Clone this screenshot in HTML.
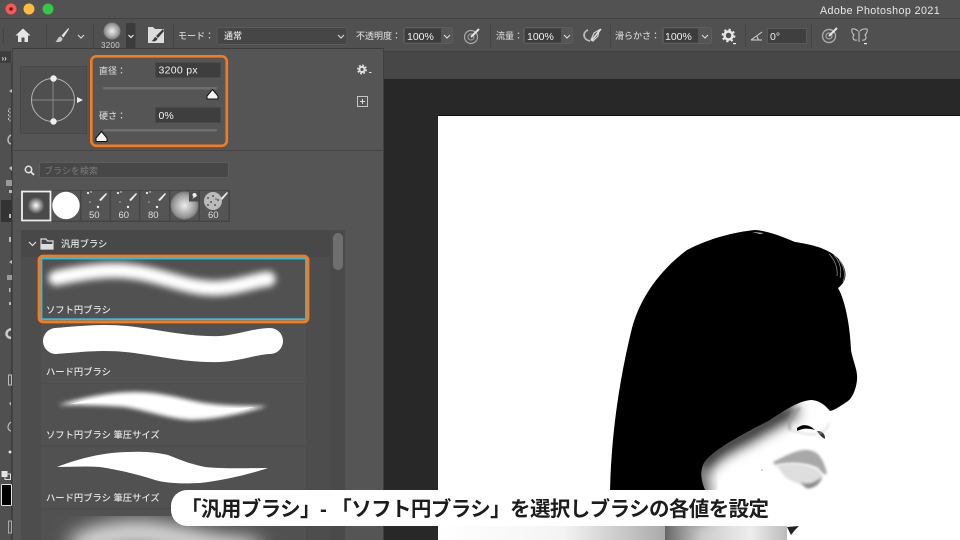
<!DOCTYPE html>
<html lang="ja"><head><meta charset="utf-8"><title>Photoshop</title>
<style>
html,body{margin:0;padding:0;background:#282828;width:960px;height:540px;overflow:hidden}
svg{display:block}
text{font-family:"Liberation Sans","Noto Sans CJK JP",sans-serif;fill:#d6d6d6;font-size:9px}
.l{fill:#d0d0d0;font-weight:500}
.v{fill:#f0f0f0;font-size:10.5px}
.it{fill:#e4e4e4;font-size:9.3px;font-weight:500}
.ic{fill:none;stroke:#d4d4d4;stroke-width:1.2}
</style></head><body>
<svg width="960" height="540" viewBox="0 0 960 540" xmlns="http://www.w3.org/2000/svg">
<defs>
<filter id="b1" x="-20%" y="-80%" width="140%" height="260%"><feGaussianBlur stdDeviation="3.4"/></filter>
<filter id="b2" x="-20%" y="-80%" width="140%" height="260%"><feGaussianBlur stdDeviation="2.2"/></filter>
<filter id="b3" x="-30%" y="-100%" width="160%" height="300%"><feGaussianBlur stdDeviation="10"/></filter>
<filter id="b4" x="-30%" y="-30%" width="160%" height="160%"><feGaussianBlur stdDeviation="7"/></filter>
<filter id="b5" x="-30%" y="-30%" width="160%" height="160%"><feGaussianBlur stdDeviation="1.200"/></filter>
<radialGradient id="sb"><stop offset="0" stop-color="#fff"/><stop offset="1" stop-color="#fff" stop-opacity="0"/></radialGradient>
<radialGradient id="sb2"><stop offset="0" stop-color="#eee"/><stop offset=".8" stop-color="#999"/><stop offset="1" stop-color="#777"/></radialGradient>
<clipPath id="face"><path d="M660 440L760 400 850 395 852 420 848 450 833 480 820 510 806 526 790 540 660 540Z"/></clipPath>
<clipPath id="lst"><rect x="41" y="510" width="265" height="30"/></clipPath>
<linearGradient id="ggr" x1="0" y1="0" x2="1" y2="0"><stop offset="0" stop-color="#fff"/><stop offset=".55" stop-color="#f4f4f4"/><stop offset="1" stop-color="#aaa"/></linearGradient>
<linearGradient id="neck" x1="0" y1="0" x2="1" y2="0"><stop offset="0" stop-color="#666"/><stop offset=".3" stop-color="#ccc"/><stop offset=".7" stop-color="#eee"/><stop offset="1" stop-color="#bbb"/></linearGradient>
</defs>

<!-- chrome -->
<rect width="960" height="18" fill="#525252"/>
<rect y="18" width="960" height="1" fill="#424242"/>
<rect y="19" width="960" height="33" fill="#505050"/>
<rect y="52" width="960" height="27" fill="#474747"/>
<rect y="51" width="960" height="1" fill="#424242"/>
<rect y="79" width="960" height="461" fill="#282828"/>

<circle cx="11" cy="9" r="5.500" fill="#fc5753"/><circle cx="11" cy="9" r="1.700" fill="#6e1512"/>
<circle cx="29" cy="9" r="5.500" fill="#fdbc40"/>
<circle cx="48" cy="9" r="5.500" fill="#33c748"/>
<text x="820" y="14" style="font-size:10.700px;fill:#e8e8e8;letter-spacing:.42px">Adobe Photoshop 2021</text>

<!-- toolbar separators -->
<g fill="#444"><rect x="3" y="27" width="1" height="17"/><rect x="46" y="24" width="1" height="23"/><rect x="93" y="24" width="1" height="23"/><rect x="173" y="24" width="1" height="23"/><rect x="490" y="24" width="1" height="23"/><rect x="610" y="24" width="1" height="23"/><rect x="745" y="24" width="1" height="23"/><rect x="811" y="24" width="1" height="23"/></g>

<!-- home -->
<path d="M23 28.500L15.500 35.500H18V42H21.500V37.500H24.500V42H28V35.500H30.500Z" fill="#e6e6e6"/>
<!-- brush -->
<path d="M68.500 28L61.500 35.500 63.500 37.500 69 29Z" fill="#e4e4e4"/>
<path d="M60.500 36.500C57.500 37 58 40 55.500 41.500 59 43 62.500 41.500 62.500 38.500Z" fill="#c8c8c8"/>
<path d="M78 35l3 3 3-3" class="ic"/>
<circle cx="112" cy="31" r="8.500" fill="url(#sb2)"/>
<text x="101" y="48" style="font-size:8px;fill:#ccc;letter-spacing:.3px">3200</text>
<rect x="126" y="23" width="9.500" height="25" rx="1" fill="#3b3b3b"/>
<path d="M128.500 35l2.500 2.500 2.500-2.500" class="ic" style="stroke:#eee"/>
<path d="M148 27H153L155 29H164V43H148Z" fill="#ddd"/>
<path d="M163 29L156 36 158 38 164 31Z M155.500 37C153.500 37.500 154 40 151.500 41 154 42 157 41 157.500 38.500Z" fill="#3a3a3a"/>

<text x="178" y="39" class="l">モード：</text>
<rect x="217" y="27.500" width="130" height="17" rx="2" fill="#464646" stroke="#5a5a5a"/>
<text x="224" y="39" style="font-size:9px;fill:#e2e2e2;font-weight:500">通常</text>
<path d="M338 35l3 3 3-3" class="ic"/>

<text x="356" y="39" class="l">不透明度：</text>
<rect x="403.500" y="27.500" width="49" height="16" rx="2.500" fill="#555" stroke="#5e5e5e"/>
<rect x="405" y="28.500" width="36" height="14" fill="#3c3c3c"/>
<text x="407" y="40" class="v">100%</text>
<path d="M444 35l3 3 3-3" class="ic"/>
<circle cx="471" cy="37" r="6.500" class="ic" style="stroke:#aaa"/><circle cx="471" cy="37" r="3" class="ic" style="stroke:#999"/>
<path d="M471 37L479 29" stroke="#e4e4e4" stroke-width="2"/>

<text x="496" y="39" class="l">流量：</text>
<rect x="523.500" y="27.500" width="49" height="16" rx="2.500" fill="#555" stroke="#5e5e5e"/>
<rect x="525" y="28.500" width="36" height="14" fill="#3c3c3c"/>
<text x="527" y="40" class="v">100%</text>
<path d="M564 35l3 3 3-3" class="ic"/>
<path d="M588 30C582 32 583 40 590 41" class="ic" style="stroke:#bbb;stroke-width:1.800"/>
<path d="M591 40L594 33 599 30 598 36 593 41Z" class="ic"/>
<path d="M592 40L601 29" stroke="#e4e4e4" stroke-width="1.500"/>

<text x="615" y="39" class="l">滑らかさ：</text>
<rect x="662.500" y="27.500" width="49" height="16" rx="2.500" fill="#555" stroke="#5e5e5e"/>
<rect x="664" y="28.500" width="34" height="14" fill="#3c3c3c"/>
<text x="665" y="40" class="v">100%</text>
<path d="M702 35l3 3 3-3" class="ic"/>
<circle cx="728.500" cy="35.500" r="4" fill="none" stroke="#e8e8e8" stroke-width="2.500"/>
<circle cx="728.500" cy="35.500" r="6" fill="none" stroke="#e8e8e8" stroke-width="1.800" stroke-dasharray="2.200 2.500"/>
<rect x="733" y="43" width="3" height="1.200" fill="#eee"/>
<path d="M751 40L762 32M751 40H762M757 36.500L758.500 40" class="ic" style="stroke-width:1"/>
<rect x="767.500" y="28.500" width="39" height="15" fill="#3f3f3f" stroke="#5a5a5a"/>
<text x="770" y="40" class="v">0°</text>
<circle cx="829" cy="36" r="6.500" class="ic" style="stroke:#aaa;stroke-width:1.400"/><circle cx="829" cy="36" r="3" class="ic" style="stroke:#aaa"/>
<path d="M829 36L837 28" stroke="#e4e4e4" stroke-width="2"/>
<path d="M858 31C855 28 852 29 852 29 851 32 853 34 854 35 852 37 853 41 857 40M860 31C863 28 866 29 867 29 868 32 866 34 865 35 867 37 866 41 862 40M859 31V42" class="ic" style="stroke:#ccc;stroke-width:1"/>
<rect x="864" y="43" width="3" height="1.200" fill="#eee"/>

<!-- document -->
<rect x="438" y="115" width="522" height="1" fill="#111"/>
<rect x="438" y="116" width="522" height="424" fill="#fff"/>
<rect x="438" y="526" width="227" height="14" fill="url(#ggr)"/>
<rect x="665" y="526" width="122" height="14" fill="url(#neck)"/>

<!-- face shading -->
<g clip-path="url(#face)">
<path d="M700 472C704 458 720 448 745 436 765 424 780 416 795 408" fill="none" stroke="#000" stroke-width="14" filter="url(#b4)"/>
<ellipse cx="698" cy="495" rx="12" ry="28" fill="#555" filter="url(#b4)"/>
</g>
<path d="M787 527L799 526 795 530 791 535Z" fill="#222"/>
<path d="M610 492C611 440 618 385 632 328C640 298 660 270 687 250C710 238 735 232 755 230C768 231 780 236 795 242C815 245 835 250 843 265C848 275 845 283 838 288C845 300 850 325 851 350C853 362 858 370 857 380C856 390 852 398 848 401C842 405 835 410 830 411C825 405 820 401 812 400C800 400 785 410 770 420C745 433 720 446 708 458C700 465 699 478 706 492Z" fill="#000"/>
<path d="M839 260C844 266 846 274 843 282M834 255C840 262 842 270 840 278M829 254C835 260 838 268 837 276" stroke="#999" stroke-width=".7" fill="none"/>
<path d="M752 232L764 233 760 234Z" fill="#ccc"/>
<!-- nose -->
<path d="M800 408C792 414 787 422 790 430" fill="none" stroke="#999" stroke-width="2" filter="url(#b5)"/>
<path d="M797 428C803 423 810 425 815 430 808 428 803 428 797 431Z" fill="#000"/>
<path d="M817 431C822 431 825 433 825 439 821 437 819 434 817 431Z" fill="#333"/>
<path d="M790 430C800 433 824 441 829 423" fill="none" stroke="#ccc" stroke-width="1.200" filter="url(#b5)"/>
<!-- lips -->
<path d="M773 462C785 456 798 449 808 450 818 451 823 458 827 473 825 476 823 474 818 468 806 462 790 462 775 465Z" fill="#a8a8a8" filter="url(#b5)"/>
<path d="M776 465C792 462 808 464 818 470 825 476 823 480 816 486 808 488 795 483 786 478Z" fill="#dedede" filter="url(#b5)"/>
<path d="M800 482C808 486 816 482 822 477 820 484 812 490 806 488Z" fill="#8a8a8a" filter="url(#b5)"/>
<circle cx="762" cy="470" r="1" fill="#ccc"/>

<!-- left strip -->
<rect x="0" y="52" width="12" height="488" fill="#505050"/>
<rect x="0" y="52" width="11" height="11" fill="#3d3d3d"/>
<text x="1.500" y="61" style="font-size:8px;fill:#ddd;font-weight:bold">››</text>
<rect x="11" y="63" width="1" height="477" fill="#3c3c3c"/>
<rect x="1" y="200" width="11" height="22" rx="1" fill="#333"/>
<g fill="#bbb">
<path d="M9 91L12 89V93Z"/><rect x="8.500" y="109" width="1.500" height="12" fill="none" stroke="#bbb" stroke-dasharray="2 2"/>
<path d="M11 135C7 137 7 143 11 144" fill="none" stroke="#bbb" stroke-width="1.500"/>
<path d="M9 168L12 166V171Z"/><rect x="6" y="180" width="6" height="6" fill="#999"/><rect x="9" y="190" width="3" height="3"/>
<rect x="9" y="214" width="2" height="4"/><rect x="9" y="237" width="2" height="5"/><path d="M9 262L12 260V264Z"/>
<rect x="7" y="275" width="5" height="5" fill="#999"/><rect x="9" y="288" width="1.500" height="4"/><rect x="9" y="302" width="2" height="3"/>
<path d="M11 329C5 331 5 337 11 338" fill="none" stroke="#ccc" stroke-width="2.500"/>
<rect x="8.500" y="375" width="3" height="10" fill="none" stroke="#bbb"/>
<path d="M9 403L11 406V402Z"/>
<path d="M11 422C7 425 7 430 11 431" fill="none" stroke="#bbb" stroke-width="1.200"/>
<circle cx="10" cy="452" r="1.500" fill="#ddd"/>
</g>
<rect x="1.500" y="471" width="6" height="6" fill="#e6e6e6"/><rect x="5" y="474" width="5.500" height="5.500" fill="none" stroke="#ddd"/>
<rect x="1.500" y="484.500" width="10" height="21" rx="1" fill="#000" stroke="#ddd" stroke-width="1"/>
<rect x="8.500" y="521" width="3" height="12" fill="none" stroke="#aaa"/>

<!-- panel -->
<rect x="12" y="48" width="372" height="492" fill="#555"/>
<rect x="12" y="48" width="372" height="1" fill="#3c3c3c"/>
<rect x="383" y="48" width="1" height="492" fill="#3f3f3f"/>
<rect x="12" y="48" width="1" height="492" fill="#444"/>
<rect x="12" y="150" width="372" height="1" fill="#454545"/>

<rect x="20.500" y="66.500" width="66" height="67" fill="#4f4f4f" stroke="#484848"/>
<circle cx="53" cy="100" r="21.500" fill="none" stroke="#b4b4b4" stroke-width="1"/>
<path d="M32 100H74M53 79V122" stroke="#878787" stroke-width="1"/>
<circle cx="53.500" cy="78.500" r="3.200" fill="#eee"/><circle cx="53.500" cy="121.500" r="3.200" fill="#eee"/>
<path d="M77 97L83 100 77 103Z" fill="#eee"/>

<text x="99" y="74" class="l">直径：</text>
<rect x="155.500" y="62.500" width="65" height="15" fill="#3e3e3e" stroke="#4a4a4a"/>
<text x="158.500" y="73.500" class="v" style="letter-spacing:.3px">3200 px</text>
<rect x="103" y="87" width="114" height="2.500" rx="1" fill="#6e6e6e"/>
<path d="M212.500 89.500L218 96V99H207V96Z" fill="#f4f4f4" stroke="#111" stroke-width="1" stroke-linejoin="round"/>
<text x="99" y="119" class="l">硬さ：</text>
<rect x="155.500" y="107.500" width="65" height="15" fill="#3e3e3e" stroke="#4a4a4a"/>
<text x="158.500" y="119" class="v">0%</text>
<rect x="103" y="129" width="114" height="2.500" rx="1" fill="#6e6e6e"/>
<path d="M101.500 131.500L107 138V141.500H96V138Z" fill="#f4f4f4" stroke="#111" stroke-width="1" stroke-linejoin="round"/>
<rect x="91.300" y="56.300" width="135.500" height="89.500" rx="5" fill="none" stroke="#f77b1e" stroke-width="2.600"/>

<circle cx="362" cy="69.500" r="2.600" fill="none" stroke="#e0e0e0" stroke-width="2"/>
<circle cx="362" cy="69.500" r="4.200" fill="none" stroke="#e0e0e0" stroke-width="1.500" stroke-dasharray="1.800 1.500"/>
<rect x="369" y="72" width="2.500" height="1" fill="#ddd"/>
<rect x="357.500" y="96.500" width="10" height="10" fill="none" stroke="#c4c4c4"/>
<path d="M360 101.500H365M362.500 99V104" stroke="#ddd"/>

<circle cx="28.500" cy="169.500" r="3.200" fill="none" stroke="#e4e4e4" stroke-width="1.500"/>
<path d="M31 172L34 175" stroke="#e4e4e4" stroke-width="1.800"/>
<rect x="39.500" y="162.500" width="189" height="15" fill="#474747" stroke="#5c5c5c"/>
<text x="44" y="174" style="font-size:9px;fill:#7b7b7b">ブラシを検索</text>

<!-- presets -->
<rect x="21" y="190" width="209" height="32" fill="#454545"/>
<g fill="#555"><rect x="52" y="191" width="28" height="29.500"/><rect x="81.500" y="191" width="28" height="29.500"/><rect x="111" y="191" width="28" height="29.500"/><rect x="140.500" y="191" width="28.500" height="29.500"/><rect x="170.500" y="191" width="28" height="29.500"/><rect x="200" y="191" width="28.500" height="29.500"/></g>
<rect x="22" y="191.500" width="28.500" height="29" fill="#4a4a4a" stroke="#eee" stroke-width="1.800"/>
<circle cx="36" cy="205.500" r="8.500" fill="url(#sb)"/>
<circle cx="66" cy="205.500" r="13.700" fill="#fff"/>
<g fill="#eee">
<g id="pd"><circle cx="88" cy="193" r="1.100"/><circle cx="91" cy="192" r=".7"/><circle cx="90" cy="202" r=".6"/><circle cx="98" cy="207" r="1.200"/><path d="M99 200L106 193 107 194 101 201Z"/></g>
<use href="#pd" x="30"/><use href="#pd" x="59"/>
</g>
<text x="89" y="218" style="font-size:9.500px;fill:#ddd">50</text>
<text x="118.500" y="218" style="font-size:9.500px;fill:#ddd">60</text>
<text x="148" y="218" style="font-size:9.500px;fill:#ddd">80</text>
<circle cx="184.500" cy="205.500" r="14" fill="url(#sb2)"/>
<rect x="189" y="192" width="9.500" height="9.500" fill="#4a4a4a"/><path d="M192 199L196 194 197 196Z" fill="#eee"/><circle cx="194.500" cy="195" r="2" fill="#eee"/>
<circle cx="213" cy="201" r="9" fill="#bbb"/>
<g fill="#555"><circle cx="208" cy="198" r="1"/><circle cx="213" cy="196" r="1"/><circle cx="218" cy="200" r="1"/><circle cx="211" cy="202" r="1"/><circle cx="215" cy="205" r="1"/><circle cx="208" cy="205" r="1"/><circle cx="216" cy="199" r=".8"/></g>
<path d="M221 198L227 192 228 193 222 200Z" fill="#eee"/>
<text x="208" y="218" style="font-size:9.500px;fill:#ddd">60</text>

<!-- list -->
<rect x="21" y="230" width="324" height="310" fill="#4d4d4d"/>
<rect x="21" y="230" width="309" height="27" fill="#484848"/>
<rect x="330" y="230" width="15" height="310" fill="#4a4a4a"/>
<rect x="333" y="233" width="10" height="37" rx="5" fill="#6f6f6f"/>
<path d="M29 242l3.500 3.500 3.500-3.500" class="ic" style="stroke:#ddd"/>
<path d="M41 239H46L47.500 241H53V249H41Z" fill="none" stroke="#ddd" stroke-width="1.200"/><rect x="41" y="244" width="12" height="5" fill="#ddd"/>
<text x="61" y="247" class="it">汎用ブラシ</text>

<g fill="#515151">
<rect x="41" y="257" width="265" height="64"/>
<rect x="41" y="322" width="265" height="61"/>
<rect x="41" y="384" width="265" height="61"/>
<rect x="41" y="447" width="265" height="61"/>
<rect x="41" y="510" width="265" height="30"/>
</g>

<path d="M56 278C80 273 108 268 135 272 165 276 190 290 220 288 240 287 255 280 268 279" fill="none" stroke="#fff" stroke-width="15" stroke-linecap="round" filter="url(#b1)"/>
<text x="46" y="313" class="it">ソフト円ブラシ</text>
<path d="M56 341C80 339 105 336 135 340 165 344 190 350 220 349 240 348 255 341 270 341" fill="none" stroke="#fff" stroke-width="26" stroke-linecap="round"/>
<text x="46" y="375" class="it">ハード円ブラシ</text>
<path d="M58 405C85 397 110 392 135 392 165 392 185 400 205 403 225 406 250 406 267 406 245 413 215 420 190 420 165 418 145 410 125 407 100 405 75 405 58 405Z" fill="#fff" filter="url(#b2)"/>
<path d="M70 404C95 398 115 396 135 396 165 396 185 404 205 407 225 409 240 408 255 407 235 412 210 416 190 415 165 413 145 406 125 403 100 402 85 403 70 404Z" fill="#fff"/>
<text x="46" y="438" class="it">ソフト円ブラシ 筆圧サイズ</text>
<path d="M57 467C80 458 105 452 130 452 145 451 160 453 168 455 178 459 190 464 205 467 225 469 250 468 268 468 250 474 225 480 200 483 180 484 165 483 155 480 140 475 120 470 100 467 85 466 70 467 57 467Z" fill="#fff"/>
<text x="46" y="501" class="it">ハード円ブラシ 筆圧サイズ</text>
<g clip-path="url(#lst)"><path d="M80 545C105 534 135 530 165 536 195 541 220 550 250 550" fill="none" stroke="#fff" stroke-width="20" stroke-linecap="round" filter="url(#b3)"/></g>

<rect x="41.500" y="258.500" width="264.500" height="60.700" fill="none" stroke="#22c4f0" stroke-width="1.800"/>
<rect x="39.100" y="256.100" width="268.800" height="65.800" rx="4" fill="none" stroke="#f77b1e" stroke-width="3"/>

<!-- caption -->
<rect x="171" y="490" width="617" height="36" rx="16" fill="#fff"/>
<text x="181" y="516" textLength="588" lengthAdjust="spacing" style="font-size:20.500px;font-weight:700;fill:#1c1c1c">「汎用ブラシ」- 「ソフト円ブラシ」を選択しブラシの各値を設定</text>
</svg>
</body></html>
